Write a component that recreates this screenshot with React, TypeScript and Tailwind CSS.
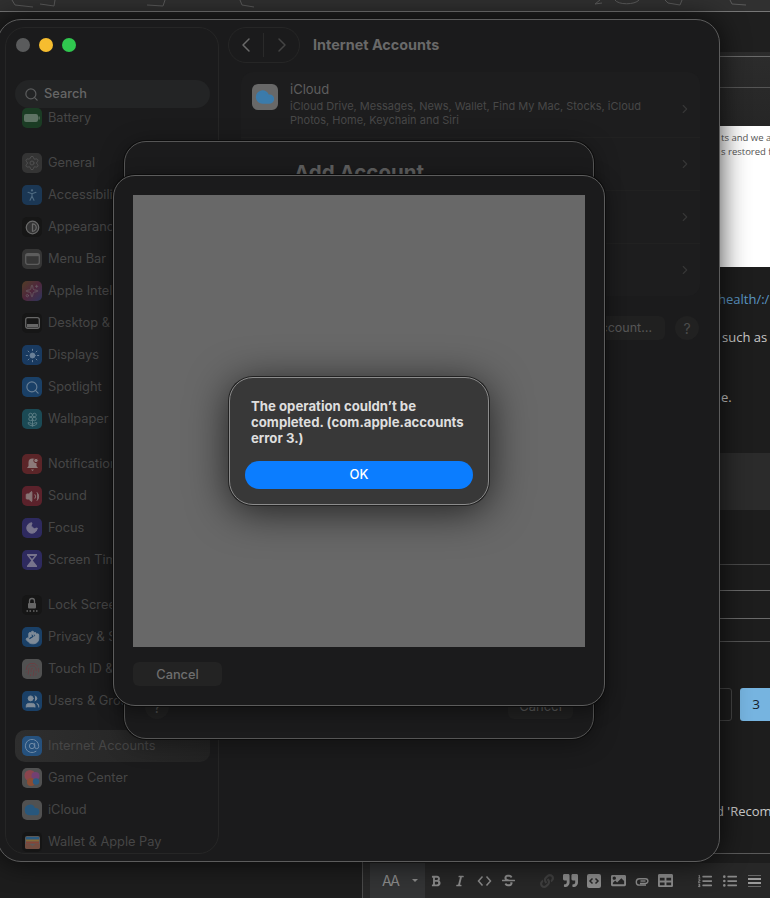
import React from "react";
import { Search, ChevronLeft, ChevronRight, Settings, PersonStanding, Contrast, Sparkles, Sun, Flower2, Volume2, Moon, Hand, Fingerprint, Users, AtSign, Cloud } from "lucide-react";
import { FaBold, FaItalic, FaStrikethrough, FaLink, FaQuoteRight, FaImage, FaListOl, FaListUl, FaTable, FaOutdent } from "react-icons/fa";

const BatteryGlyph = () => (
  <svg width="16" height="8" viewBox="0 0 16 8"><rect width="14" height="8" rx="2" fill="#6f8a76" /><rect x="14.5" y="2.5" width="1.2" height="3" fill="#6f8a76" /></svg>
);
const MenuBarGlyph = () => (
  <svg width="15" height="12" viewBox="0 0 15 12" fill="none"><rect x=".7" y=".7" width="13.6" height="10.6" rx="2" stroke="#6e6e6e" strokeWidth="1.3" /><rect x="1" y="1" width="13" height="2.2" fill="#6e6e6e" /></svg>
);
const DesktopGlyph = () => (
  <svg width="15" height="12" viewBox="0 0 15 12" fill="none"><rect x=".7" y=".7" width="13.6" height="10.6" rx="2" stroke="#7a7a7a" strokeWidth="1.3" /><rect x="2" y="7" width="11" height="3.4" fill="#7a7a7a" /></svg>
);
const GameGlyph = () => (
  <svg width="18" height="18" viewBox="0 0 18 18"><circle cx="7" cy="6.5" r="5.5" fill="#a8505a" /><circle cx="12.5" cy="7" r="4" fill="#8a4a88" /><circle cx="8" cy="13" r="4" fill="#a85a3a" /><circle cx="13" cy="12.5" r="3.2" fill="#2f6c9c" /></svg>
);
const WalletGlyph = () => (
  <svg width="15" height="15" viewBox="0 0 15 15"><rect x="0" y="1" width="15" height="13" rx="2" fill="#6a6a6a" /><rect x="1" y="2" width="13" height="2.6" fill="#2f6c9c" /><rect x="1" y="4.6" width="13" height="2" fill="#a08040" /><rect x="1" y="6.6" width="13" height="2" fill="#a05040" /><path d="M0 9h4.5l3 2 3-2H15v3a2 2 0 0 1-2 2H2a2 2 0 0 1-2-2z" fill="#8a5a4a" /></svg>
);
const LockGlyph = () => (
  <svg width="14" height="16" viewBox="0 0 14 16" fill="none"><path d="M4.5 6V4a2.5 2.5 0 0 1 5 0v2" stroke="#7a7a7a" strokeWidth="1.3" /><rect x="3" y="6" width="8" height="5.5" rx="1" fill="#7a7a7a" /><path d="M1.5 14h1.5M4.5 14h1.5M8 14h1.5M11 14h1.5" stroke="#7a7a7a" strokeWidth="1.4" /></svg>
);
const BellGlyph = () => (
  <svg width="15" height="15" viewBox="0 0 15 15"><path d="M7.5 1.5a4 4 0 0 0-4 4v3.5L2 11h11l-1.5-2V5.5a4 4 0 0 0-4-4z" fill="#a99292" /><path d="M6 12.5h3l-1.5 1.5z" fill="#a99292" /><circle cx="11" cy="3.5" r="2.2" fill="#a99292" stroke="#6c282c" /></svg>
);
const HourGlyph = () => (
  <svg width="12" height="15" viewBox="0 0 12 15"><path d="M1 1h10v1.2L6.8 7.5 11 12.8V14H1v-1.2L5.2 7.5 1 2.2z" fill="#8f8aa8" /><path d="M3.5 3h5L6 6z" fill="#332e70" /></svg>
);

type Row = { label: string; bg: string; glyph: React.ReactNode; active?: boolean };

const groups: Row[][] = [
  [{ label: "Battery", bg: "bg-[#1c4527]", glyph: <BatteryGlyph /> }],
  [
    { label: "General", bg: "bg-[#3b3b3b]", glyph: <Settings size={16} color="#5f5f5f" strokeWidth={1.4} /> },
    { label: "Accessibility", bg: "bg-[#1b3f63]", glyph: <PersonStanding size={16} color="#5d7f9c" strokeWidth={1.6} /> },
    { label: "Appearance", bg: "bg-[#151515]", glyph: <Contrast size={15} color="#7d7d7d" fill="#3a3a3a" strokeWidth={2} /> },
    { label: "Menu Bar", bg: "bg-[#3d3d3d]", glyph: <MenuBarGlyph /> },
    { label: "Apple Intelligence", bg: "bg-gradient-to-br from-[#5f4526] via-[#5c2a44] to-[#2f3a6c]", glyph: <Sparkles size={14} color="#7c6c74" strokeWidth={1.4} /> },
    { label: "Desktop & Dock", bg: "bg-[#151515]", glyph: <DesktopGlyph /> },
    { label: "Displays", bg: "bg-[#194272]", glyph: <Sun size={15} color="#7e9ab8" fill="#7e9ab8" strokeWidth={1.6} /> },
    { label: "Spotlight", bg: "bg-[#1a4a7a]", glyph: <Search size={15} color="#7c98b4" strokeWidth={1.8} /> },
    { label: "Wallpaper", bg: "bg-[#1c5664]", glyph: <Flower2 size={15} color="#6d98a0" strokeWidth={1.5} /> },
  ],
  [
    { label: "Notifications", bg: "bg-[#6c282c]", glyph: <BellGlyph /> },
    { label: "Sound", bg: "bg-[#6c242f]", glyph: <Volume2 size={15} color="#a28c8c" fill="#a28c8c" strokeWidth={1.6} /> },
    { label: "Focus", bg: "bg-[#332e70]", glyph: <Moon size={14} color="#8f8aa8" fill="#8f8aa8" strokeWidth={1.6} /> },
    { label: "Screen Time", bg: "bg-[#332e70]", glyph: <HourGlyph /> },
  ],
  [
    { label: "Lock Screen", bg: "bg-[#151515]", glyph: <LockGlyph /> },
    { label: "Privacy & Security", bg: "bg-[#1a4a7a]", glyph: <Hand size={15} color="#98a8b8" fill="#98a8b8" strokeWidth={1.4} /> },
    { label: "Touch ID & Password", bg: "bg-[#5f5f5f]", glyph: <Fingerprint size={15} color="#7f474c" strokeWidth={1.5} /> },
    { label: "Users & Groups", bg: "bg-[#1a4a7a]", glyph: <Users size={15} color="#98a8b8" fill="#98a8b8" strokeWidth={1.4} /> },
  ],
  [
    { label: "Internet Accounts", bg: "bg-[#245a92]", glyph: <AtSign size={16} color="#80a2c4" strokeWidth={1.5} />, active: true },
    { label: "Game Center", bg: "bg-[#5f5f5f]", glyph: <GameGlyph /> },
    { label: "iCloud", bg: "bg-[#5f5f5f]", glyph: <Cloud size={16} color="#2c6795" fill="#2c6795" /> },
    { label: "Wallet & Apple Pay", bg: "bg-[#151515]", glyph: <WalletGlyph /> },
  ],
];

function SideRow({ r }: { r: Row }) {
  return (
    <div className={`flex h-8 items-center gap-[6px] rounded-[10px] px-[7px] ${r.active ? "bg-gradient-to-r from-[#2e2e2e] to-[#232323]" : ""}`}>
      <div className={`flex h-5 w-5 shrink-0 items-center justify-center rounded-[5px] opacity-80 ${r.bg}`}>{r.glyph}</div>
      <span className="whitespace-nowrap text-[12.8px] text-[#464646]">{r.label}</span>
    </div>
  );
}

function ListRow({ h }: { h: string }) {
  return (
    <div className={`flex items-center justify-end pr-[8px] ${h}`}>
      <ChevronRight size={14} color="#363636" />
    </div>
  );
}

const ClipIcon = () => (
  <svg width="15" height="10" viewBox="0 0 15 10" fill="none" stroke="#8a8a8a" strokeWidth="1.4">
    <path d="M5 7.5h5.5a2.2 2.2 0 0 0 0-4.8H4.5a3.2 3.2 0 0 0 0 6.4h6.5" />
    <path d="M10.5 5H5.5" />
  </svg>
);

const CodeBlockIcon = () => (
  <svg width="14" height="14" viewBox="0 0 14 14">
    <rect width="14" height="14" rx="2" fill="#8a8a8a" />
    <path d="M5.5 4.5 3 7l2.5 2.5M8.5 4.5 11 7 8.5 9.5" fill="none" stroke="#262626" strokeWidth="1.5" />
  </svg>
);

const CodeIcon = () => (
  <svg width="15" height="12" viewBox="0 0 15 12" fill="none" stroke="#8a8a8a" strokeWidth="1.5">
    <path d="M5.5 1.5 1.5 6l4 4.5M9.5 1.5l4 4.5-4 4.5" />
  </svg>
);

const Cell = ({ w, children }: { w: string; children: React.ReactNode }) => (
  <div className={`flex shrink-0 items-center justify-center ${w}`}>{children}</div>
);

function Toolbar() {
  const c = "#8a8a8a";
  return (
    <div className="flex h-[35px] items-center overflow-hidden bg-[#272727] pl-[7px]">
      <div className="flex h-full w-[55px] shrink-0 items-center bg-[#333435] pl-[12px]">
        <span className="text-[14px] leading-none tracking-[-1.5px] text-[#8a8a8a]">AA</span>
        <span className="ml-[13px] h-0 w-0 border-x-[3px] border-t-[3px] border-x-transparent border-t-[#8a8a8a]" />
      </div>
      <div className="ml-[-1px] flex items-center">
        <Cell w="w-[24px]"><FaBold size={12} color={c} /></Cell>
        <Cell w="w-[24px]"><FaItalic size={12} color={c} /></Cell>
        <Cell w="w-[24px]"><CodeIcon /></Cell>
        <Cell w="w-[24px]"><FaStrikethrough size={13} color={c} /></Cell>
      </div>
      <div className="ml-[15px] flex items-center">
        <Cell w="w-[23.8px]"><FaLink size={14} color="#3f3f3f" /></Cell>
        <Cell w="w-[23.8px]"><FaQuoteRight size={15} color={c} /></Cell>
        <Cell w="w-[23.8px]"><CodeBlockIcon /></Cell>
        <Cell w="w-[23.8px]"><FaImage size={15} color={c} /></Cell>
        <Cell w="w-[23.8px]"><ClipIcon /></Cell>
        <Cell w="w-[23.8px]"><FaTable size={15} color={c} /></Cell>
      </div>
      <div className="ml-[15px] flex items-center">
        <Cell w="w-[24.5px]"><FaListOl size={14} color={c} /></Cell>
        <Cell w="w-[24.5px]"><FaListUl size={14} color={c} /></Cell>
        <Cell w="w-[24.5px]">
          <div className="flex w-[13px] flex-col gap-[2px]">
            <div className="h-px bg-[#666666]" />
            <div className="h-[2px] bg-[#9a9a9a]" />
            <div className="h-[2px] bg-[#9a9a9a]" />
            <div className="h-px bg-[#666666]" />
          </div>
        </Cell>
        <Cell w="w-[24.5px]"><FaOutdent size={14} color={c} /></Cell>
      </div>
    </div>
  );
}

function BackPage() {
  const body = "whitespace-nowrap font-['Open_Sans',sans-serif]";
  return (
    <div className="flex h-[898px] w-[770px] flex-col overflow-hidden bg-[#1d1d1d]">
      <div className="h-[12px] border-b border-[#777777] bg-[#303030]">
        <svg width="770" height="11" fill="none" stroke="#5a5a5a" strokeWidth="1">
          <path d="M12 0l3 5 18 2M40 4l14 2 1-6" />
          <path d="M165 0l-2 6-16-1M240 0l2 5 12 2" />
          <path d="M600 0l-5 4 7-1M615 0c3 5 20 5 24 0M665 0l3 3 12 2 2-5M730 0l2 4 14 1" />
        </svg>
      </div>
      <div className="h-[40px] bg-[#1f1f1f]" />
      <div className="h-[74px] bg-gradient-to-b from-[#2c2c2c] to-[#262626]">
        <div className="mt-[4px] h-px bg-[#6a6a6a]" />
        <div className="mt-[30px] h-px bg-[#555555]" />
      </div>
      <div className="flex h-[141px] flex-col bg-white pl-[721px] pt-[5px] font-['Open_Sans',sans-serif] text-[9.5px] leading-[14px] text-[#555555]">
        <span className="whitespace-nowrap">ts and we a</span>
        <span className="whitespace-nowrap">s restored f</span>
      </div>
      <div className={`${body} mt-[23px] pl-[718px] text-[13px] leading-[18px] text-[#5b97c5]`}>health/:/</div>
      <div className={`${body} mt-[20px] pl-[722px] text-[13px] leading-[18px] text-[#c9c9c9]`}>such as</div>
      <div className={`${body} mt-[42px] pl-[721px] text-[13px] leading-[18px] text-[#c9c9c9]`}>e.</div>
      <div className="mt-[47px] h-[57px] bg-[#2b2b2b]" />
      <div className="mt-[54px] h-px bg-[#4a4a4a]" />
      <div className="mt-[25px] h-px bg-[#6a6a6a]" />
      <div className="mt-[27px] h-px bg-[#6a6a6a]" />
      <div className="mt-[22px] h-px bg-[#555555]" />
      <div className="mt-[46px] flex h-[33px] justify-end gap-[8px]">
        <div className="h-full w-[20px] rounded-[3px] border border-[#444444]" />
        <div className="flex h-full w-[30px] items-center justify-center rounded-l-[3px] bg-[#76b4e0] pl-[2px] font-['Open_Sans',sans-serif] text-[13.5px] text-[#14212c]">3</div>
      </div>
      <div className={`${body} mt-[81px] pl-[716px] text-[13px] leading-[18px] text-[#c9c9c9]`}>d &apos;Recom</div>
      <div className="ml-[364px] mt-[33px] h-px bg-[#5a5a5a]" />
      <div className="ml-[362px] flex-1 border-l border-[#4a4a4a] pt-[9px]">
        <Toolbar />
      </div>
    </div>
  );
}

export default function App() {
  return (
    <div className="relative h-[898px] w-[770px] overflow-hidden font-['Inter',sans-serif]">
      <BackPage />

      {/* System Settings window */}
      <div className="absolute left-[-3px] top-[19px] flex h-[843px] w-[723px] gap-[9px] rounded-[24px] border border-[#5c5c5c] bg-[#1b1b1c] p-[7px] shadow-[0_0_28px_rgba(0,0,0,0.75)]">
        <div className="relative w-[214px] shrink-0 overflow-hidden rounded-[20px] border border-[#262626] bg-[#1b1b1c] pl-[9px] pr-[8px] pt-[74px]">
          <div className="absolute left-[10px] top-[10px] flex gap-[9px]">
            <span className="h-[14px] w-[14px] rounded-full bg-[#5a5b5c]" />
            <span className="h-[14px] w-[14px] rounded-full bg-[#f6bd2f]" />
            <span className="h-[14px] w-[14px] rounded-full bg-[#30c74f]" />
          </div>
          <div className="flex flex-col gap-[13px]">
            {groups.map((g, i) => (
              <div key={i} className="flex flex-col">
                {g.map((r) => (
                  <SideRow key={r.label} r={r} />
                ))}
              </div>
            ))}
          </div>
          <div className="absolute left-[9px] top-[52px] flex h-[28px] w-[195px] items-center gap-[5px] rounded-[14px] bg-[#232425] pl-[9px]">
            <Search size={15} color="#5a5b5c" />
            <span className="text-[12.8px] font-medium text-[#666666]">Search</span>
          </div>
        </div>

        <div className="flex min-w-0 flex-1 flex-col">
          <div className="flex h-[36px] items-center gap-[13px]">
            <div className="flex h-[36px] w-[72px] items-center rounded-[18px] border border-[#262626]">
              <div className="flex w-[35px] justify-center border-r border-[#2a2a2a]">
                <ChevronLeft size={24} color="#6a6a6a" strokeWidth={1.5} />
              </div>
              <div className="flex flex-1 justify-center">
                <ChevronRight size={24} color="#444444" strokeWidth={1.5} />
              </div>
            </div>
            <span className="text-[14.4px] font-bold text-[#696969]">Internet Accounts</span>
          </div>

          <div className="ml-[13px] mr-[12px] mt-[9px] flex h-[224px] flex-col rounded-[12px] bg-[#1d1d1e]">
            <div className="flex h-[66px] items-start gap-[12px] border-b border-[#212121] pl-[11px] pr-[8px] pt-[9px]">
              <div className="mt-[3px] flex h-[26px] w-[26px] shrink-0 items-center justify-center rounded-[6px] bg-[#686868]">
                <Cloud size={20} color="#3b7bab" fill="#3b7bab" />
              </div>
              <div className="flex w-[378px] flex-col">
                <span className="text-[13px] leading-[16px] text-[#5e5e5e]">iCloud</span>
                <span className="mt-[2px] text-[11px] leading-[14px] text-[#484848]">iCloud Drive, Messages, News, Wallet, Find My Mac, Stocks, iCloud Photos, Home, Keychain and Siri</span>
              </div>
              <ChevronRight size={14} color="#363636" className="ml-auto self-center" />
            </div>
            <ListRow h="h-[53px] border-b border-[#212121]" />
            <ListRow h="h-[53px] border-b border-[#212121]" />
            <ListRow h="h-[52px]" />
          </div>

          <div className="mr-[13px] mt-[20px] flex items-center justify-end gap-[10px]">
            <div className="flex h-[24px] items-center rounded-[6px] bg-[#202020] px-[13px] text-[12.5px] text-[#565656]">Add Account…</div>
            <div className="flex h-[24px] w-[24px] items-center justify-center rounded-full bg-[#212121] text-[14px] text-[#4c4c4c]">?</div>
          </div>
        </div>
      </div>

      {/* Add Account sheet */}
      <div className="absolute left-[124px] top-[141px] flex h-[598px] w-[470px] flex-col justify-between rounded-[22px] border border-[#555555] bg-[#1b1b1c] px-[20px] pb-[19px] pt-[19px] shadow-[0_0_0_1px_#0c0c0c,0_4px_24px_rgba(0,0,0,0.4)]">
        <div className="text-center text-[20.5px] font-bold leading-[24px] text-[#5e5e5e]">Add Account</div>
        <div className="flex items-center justify-between">
          <div className="flex h-[24px] w-[24px] items-center justify-center rounded-full bg-[#202020] text-[14px] text-[#4c4c4c]">?</div>
          <div className="flex h-[24px] w-[65px] items-center justify-center rounded-[6px] bg-[#202020] text-[13px] text-[#565656]">Cancel</div>
        </div>
      </div>

      {/* Web sheet */}
      <div className="absolute left-[113px] top-[175px] flex h-[531px] w-[492px] flex-col gap-[15px] rounded-[22px] border border-[#5c5c5c] bg-[#1b1b1c] px-[19px] pt-[19px] shadow-[0_0_0_1px_#0c0c0c,0_4px_20px_rgba(0,0,0,0.45)]">
        <div className="h-[452px] w-[452px] bg-[#686868]" />
        <div className="flex h-[24px] w-[89px] items-center justify-center rounded-[6px] bg-[#232323] pt-px text-[12.8px] font-medium text-[#6e6e6e]">Cancel</div>
      </div>

      {/* Alert */}
      <div className="absolute left-[229px] top-[377px] flex h-[128px] w-[260px] flex-col rounded-[24px] border border-[#8c8c8c] bg-[#383838] px-[15px] pt-[20px] shadow-[0_0_0_1px_#222222,0_6px_40px_rgba(0,0,0,0.7)]">
        <p className="px-[6px] text-[13.2px] font-bold leading-[16px] text-[#dedede]">The operation couldn’t be completed. (com.apple.accounts error 3.)</p>
        <div className="mt-[15px] flex h-[28px] items-center justify-center rounded-[14px] bg-[#0b7dff] text-[13px] font-medium text-white">OK</div>
      </div>
    </div>
  );
}
